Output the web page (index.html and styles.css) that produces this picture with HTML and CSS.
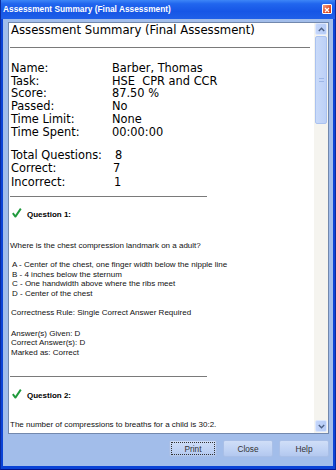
FILE: index.html
```html
<!DOCTYPE html>
<html>
<head>
<meta charset="utf-8">
<link rel="stylesheet" href="styles.css">
</head>
<body>
<div class="window">
  <div class="titlebar">
    <span class="title">Assessment Summary (Final Assessment)</span>
    <span class="close-btn"><svg width="10" height="10" viewBox="0 0 10 10"><path d="M2.5 2.5 L7.5 7.5 M7.5 2.5 L2.5 7.5" stroke="#fff" stroke-width="1.6"/></svg></span>
  </div>
  <div class="client">
    <div class="panel">
      <div class="content">
        <div class="heading">Assessment Summary (Final Assessment)</div>
        <div class="rule rule-full"></div>
        <div class="info">
          <span>Name:</span><span>Barber, Thomas</span>
          <span>Task:</span><span>HSE&nbsp; CPR and CCR</span>
          <span>Score:</span><span>87.50 %</span>
          <span>Passed:</span><span>No</span>
          <span>Time Limit:</span><span>None</span>
          <span>Time Spent:</span><span>00:00:00</span>
        </div>
        <div class="totals">
          <span>Total Questions:</span><span class="v1">8</span>
          <span>Correct:</span><span class="v2">7</span>
          <span>Incorrect:</span><span class="v3">1</span>
        </div>
        <div class="rule rule-short r1"></div>
        <div class="qhead q1">
          <svg class="check" width="10" height="10" viewBox="0 0 10 10"><path d="M0.8 5.2 L3.4 8.6 L8.8 0.6" fill="none" stroke="#1f9a3c" stroke-width="1.9" stroke-linejoin="round"/></svg>
          <span>Question 1:</span>
        </div>
        <div class="small qtext">Where is the chest compression landmark on a adult?</div>
        <div class="small options">
          <div>A - Center of the chest, one finger width below the nipple line</div>
          <div>B - 4 inches below the sternum</div>
          <div>C - One handwidth above where the ribs meet</div>
          <div>D - Center of the chest</div>
        </div>
        <div class="small rule-text">Correctness Rule: Single Correct Answer Required</div>
        <div class="small answers">
          <div>Answer(s) Given: D</div>
          <div>Correct Answer(s): D</div>
          <div>Marked as: Correct</div>
        </div>
        <div class="rule rule-short r2"></div>
        <div class="qhead q2">
          <svg class="check" width="10" height="10" viewBox="0 0 10 10"><path d="M0.8 5.2 L3.4 8.6 L8.8 0.6" fill="none" stroke="#1f9a3c" stroke-width="1.9" stroke-linejoin="round"/></svg>
          <span>Question 2:</span>
        </div>
        <div class="small qtext2">The number of compressions to breaths for a child is 30:2.</div>
      </div>
      <div class="scrollbar">
        <div class="sb-btn"><svg width="7" height="5" viewBox="0 0 7 5"><path d="M0.8 4 L3.5 1.3 L6.2 4" fill="none" stroke="#4d6185" stroke-width="1.4"/></svg></div>
        <div class="sb-thumb"><span class="grip"></span></div>
        <div class="sb-track"></div>
        <div class="sb-btn"><svg width="7" height="5" viewBox="0 0 7 5"><path d="M0.8 1 L3.5 3.7 L6.2 1" fill="none" stroke="#4d6185" stroke-width="1.4"/></svg></div>
      </div>
    </div>
    <div class="buttons">
      <button class="btn focused"><span>Print</span></button>
      <button class="btn"><span>Close</span></button>
      <button class="btn"><span>Help</span></button>
    </div>
  </div>
</div>
</body>
</html>
```
FILE: styles.css
```css
* { box-sizing: border-box; }
html, body { margin: 0; padding: 0; }
body { width: 336px; height: 470px; overflow: hidden; background: #0a3fd2; }

.window {
  width: 336px;
  height: 470px;
  display: flex;
  flex-direction: column;
  background: #0b43d6;
  border-left: 1px solid #0a2a9e;
  border-right: 1px solid #0a2a9e;
  border-bottom: 1px solid #00138c;
}

.titlebar {
  height: 19px;
  flex: none;
  display: flex;
  align-items: center;
  justify-content: space-between;
  padding: 0 3px 1px 2px;
  background: linear-gradient(#3d86f7 0%, #2166ee 20%, #1656e6 60%, #1f5fe8 100%);
}
.title {
  font-family: "Liberation Sans", Arial, sans-serif;
  font-weight: bold;
  font-size: 8.3px;
  color: #fff;
  letter-spacing: 0.02px;
}
.close-btn {
  width: 10px;
  height: 10px;
  display: flex;
  border-radius: 1px;
  background: linear-gradient(135deg, #f3a68c, #e3532d 55%, #c83a18);
  border: 0.5px solid #fff;
}

.client {
  flex: 1;
  margin: 0 2px 3px 2px;
  background: #a2bdea;
  padding: 3px 4px 0 5px;
  display: flex;
  flex-direction: column;
}

.panel {
  height: 412px;
  border: 1px solid #7288ad;
  background: #fff;
  display: flex;
}

.content {
  flex: 1;
  padding: 0 0 0 1px;
  overflow: hidden;
  color: #000;
}

.heading {
  font-family: "DejaVu Sans", Verdana, sans-serif;
  font-size: 11.7px;
  line-height: 15px;
  padding-left: 1px;
}

.rule { height: 1px; background: #7a7a7a; }
.rule-full { width: 300px; margin-top: 9px; }
.rule-short { width: 197px; }

.info, .totals {
  font-family: "DejaVu Sans", Verdana, sans-serif;
  font-size: 11.4px;
  display: grid;
  grid-template-columns: 101px auto;
  padding-left: 1px;
}
.info { line-height: 12.7px; margin-top: 14px; }
.totals { line-height: 13.2px; margin-top: 11px; }
.totals .v1 { padding-left: 3px; }
.totals .v2 { padding-left: 1px; }
.totals .v3 { padding-left: 2px; }

.r1 { margin-top: 7px; }

.qhead {
  display: flex;
  align-items: center;
  height: 12px;
  font-family: "Liberation Sans", Arial, sans-serif;
  font-weight: bold;
  font-size: 8px;
  padding-left: 2px;
}
.qhead .check { margin-right: 5px; margin-top: -3px; }
.q1 { margin-top: 12px; }
.q2 { margin-top: 13px; }

.small {
  font-family: "Liberation Sans", Arial, sans-serif;
  font-size: 8px;
  line-height: 9.7px;
  color: #111;
}
.qtext { margin-top: 20px; }
.options { margin-top: 9.5px; padding-left: 2px; }
.rule-text { margin-top: 9px; padding-left: 1px; }
.answers { margin-top: 11px; padding-left: 1px; }
.r2 { margin-top: 18px; }
.qtext2 { margin-top: 18px; }

.scrollbar {
  width: 14px;
  flex: none;
  background: #f5f4ef;
  display: flex;
  flex-direction: column;
  padding: 0 1px 1px 1px;
}
.sb-btn {
  height: 12px;
  flex: none;
  display: flex;
  align-items: center;
  justify-content: center;
  background: linear-gradient(90deg, #c4d6fb, #b5cbf6);
  border: 1px solid #dce7fd;
  border-radius: 2px;
}
.sb-thumb {
  height: 88px;
  flex: none;
  margin-top: 1px;
  background: linear-gradient(90deg, #c9daf9, #bcd0f7);
  border: 1px solid #aac2f0;
  border-radius: 2px;
  display: flex;
  align-items: center;
  justify-content: center;
}
.grip {
  width: 5px;
  height: 4px;
  border-top: 1px solid #9db6e6;
  border-bottom: 1px solid #9db6e6;
}
.sb-track { flex: 1; }

.buttons {
  display: flex;
  justify-content: flex-end;
  gap: 6px;
  padding-top: 6px;
  padding-right: 0;
}
.btn {
  width: 50px;
  height: 17px;
  padding: 0;
  margin: 0;
  font-family: "Liberation Sans", Arial, sans-serif;
  font-size: 8.3px;
  color: #333;
  background: linear-gradient(#d0def7, #bfd2f4 60%, #b3c8ef);
  border: 1px solid #a9bfe7;
  border-radius: 2px;
  display: flex;
  align-items: center;
  justify-content: center;
}
.btn.focused { width: 48px; }
.btn.focused span {
  border: 1px dotted #333;
  width: 44px;
  height: 13px;
  display: flex;
  align-items: center;
  justify-content: center;
}
```
